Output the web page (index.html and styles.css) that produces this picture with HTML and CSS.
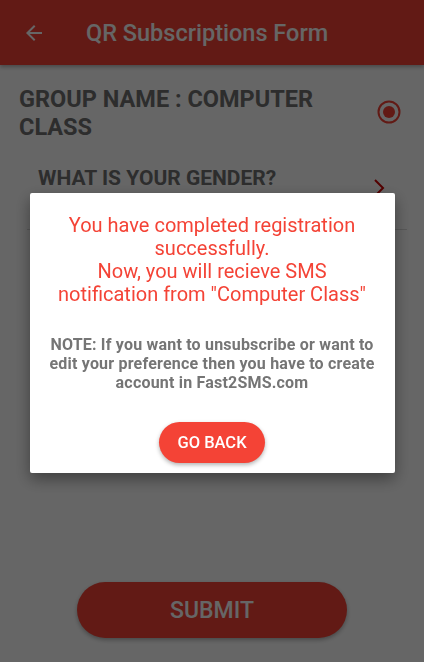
FILE: index.html
```html
<!DOCTYPE html>
<html lang="en">
<head>
  <meta charset="UTF-8">
  <meta name="viewport" content="width=device-width, initial-scale=1.0">
  <title>QR Subscriptions Form</title>
  <link rel="stylesheet" href="styles.css">
</head>
<body>
  <div class="screen">
    <header class="appbar">
      <svg class="back" width="24" height="24" viewBox="0 0 24 24">
        <path d="M20 11H7.83l5.59-5.59L12 4l-8 8 8 8 1.41-1.41L7.83 13H20v-2z" fill="#fff"/>
      </svg>
      <h1 class="title">QR Subscriptions Form</h1>
    </header>

    <div class="group">
      <h2 class="group-name">GROUP NAME : COMPUTER CLASS</h2>
      <svg class="radio" width="26" height="26" viewBox="0 0 26 26">
        <circle cx="13" cy="13" r="10.5" fill="none" stroke="#F44336" stroke-width="2"/>
        <circle cx="13" cy="13" r="6" fill="#F44336"/>
      </svg>
    </div>

    <div class="question">
      <span class="question-text">WHAT IS YOUR GENDER?</span>
      <svg class="chevron" width="14" height="20" viewBox="0 0 14 20">
        <path d="M3 2l8 8-8 8" fill="none" stroke="#d00000" stroke-width="2"/>
      </svg>
    </div>
    <div class="divider"></div>

    <button class="submit">SUBMIT</button>
  </div>

  <div class="overlay">
    <div class="dialog">
      <p class="success">
        You have completed registration<br>
        successfully.<br>
        Now, you will recieve SMS<br>
        notification from "Computer Class"
      </p>
      <p class="note">NOTE: If you want to unsubscribe or want to edit your preference then you have to create account in Fast2SMS.com</p>
      <button class="go-back">GO BACK</button>
    </div>
  </div>
</body>
</html>
```

FILE: styles.css
```css
  body {
    font-family: Roboto, "Noto Sans", Arial, sans-serif;
    margin: 0;
    width: 424px;
    height: 662px;
    overflow: hidden;
    background-color: #fff;
  }
  .screen {
    height: 662px;
    display: flex;
    flex-direction: column;
  }
  .appbar {
    height: 65px;
    background-color: #F44336;
    display: flex;
    align-items: center;
    padding-left: 22px;
    box-shadow: 0 2px 4px rgba(0, 0, 0, 0.3);
    flex-shrink: 0;
  }
  .title {
    margin: 0 0 0 40px;
    font-size: 23.5px;
    font-weight: 500;
    color: #fff;
  }
  .group {
    display: flex;
    justify-content: space-between;
    align-items: center;
    padding: 20px 22px 0 19px;
  }
  .group-name {
    margin: 0;
    font-size: 23.5px;
    line-height: 28px;
    font-weight: bold;
    color: #707070;
    width: 330px;
  }
  .radio {
    margin-top: -3px;
  }
  .question {
    display: flex;
    justify-content: space-between;
    align-items: flex-start;
    padding: 25px 38px 0 38px;
  }
  .question-text {
    font-size: 21px;
    font-weight: bold;
    color: #707070;
  }
  .chevron {
    margin-top: 12px;
  }
  .divider {
    height: 1px;
    background-color: #dcdcdc;
    margin: 31px 17px 0 27px;
  }
  .submit {
    margin: auto auto 24px auto;
    width: 270px;
    height: 56px;
    border: none;
    border-radius: 28px;
    background-color: #F44336;
    color: #fff;
    font-family: inherit;
    font-size: 23px;
    font-weight: 500;
    box-shadow: 0 2px 4px rgba(0, 0, 0, 0.3);
  }
  .overlay {
    position: fixed;
    top: 0;
    left: 0;
    right: 0;
    bottom: 0;
    background-color: rgba(0, 0, 0, 0.6);
    display: flex;
    justify-content: center;
    align-items: flex-start;
  }
  .dialog {
    margin-top: 193px;
    width: 365px;
    height: 280px;
    box-sizing: border-box;
    background-color: #fff;
    border-radius: 2px;
    box-shadow: 0 6px 16px rgba(0, 0, 0, 0.4);
    text-align: center;
    padding-top: 21px;
  }
  .success {
    margin: 0;
    color: #F44336;
    font-size: 20px;
    line-height: 23px;
  }
  .note {
    margin: 29px 10px 0 10px;
    color: #757575;
    font-size: 16px;
    font-weight: bold;
    line-height: 19px;
    letter-spacing: 0.2px;
  }
  .go-back {
    margin-top: 30px;
    height: 41px;
    padding: 0 18px;
    border: none;
    border-radius: 21px;
    background-color: #F44336;
    color: #fff;
    font-family: inherit;
    font-size: 16.5px;
    font-weight: 500;
    box-shadow: 0 2px 4px rgba(0, 0, 0, 0.3);
  }
```
